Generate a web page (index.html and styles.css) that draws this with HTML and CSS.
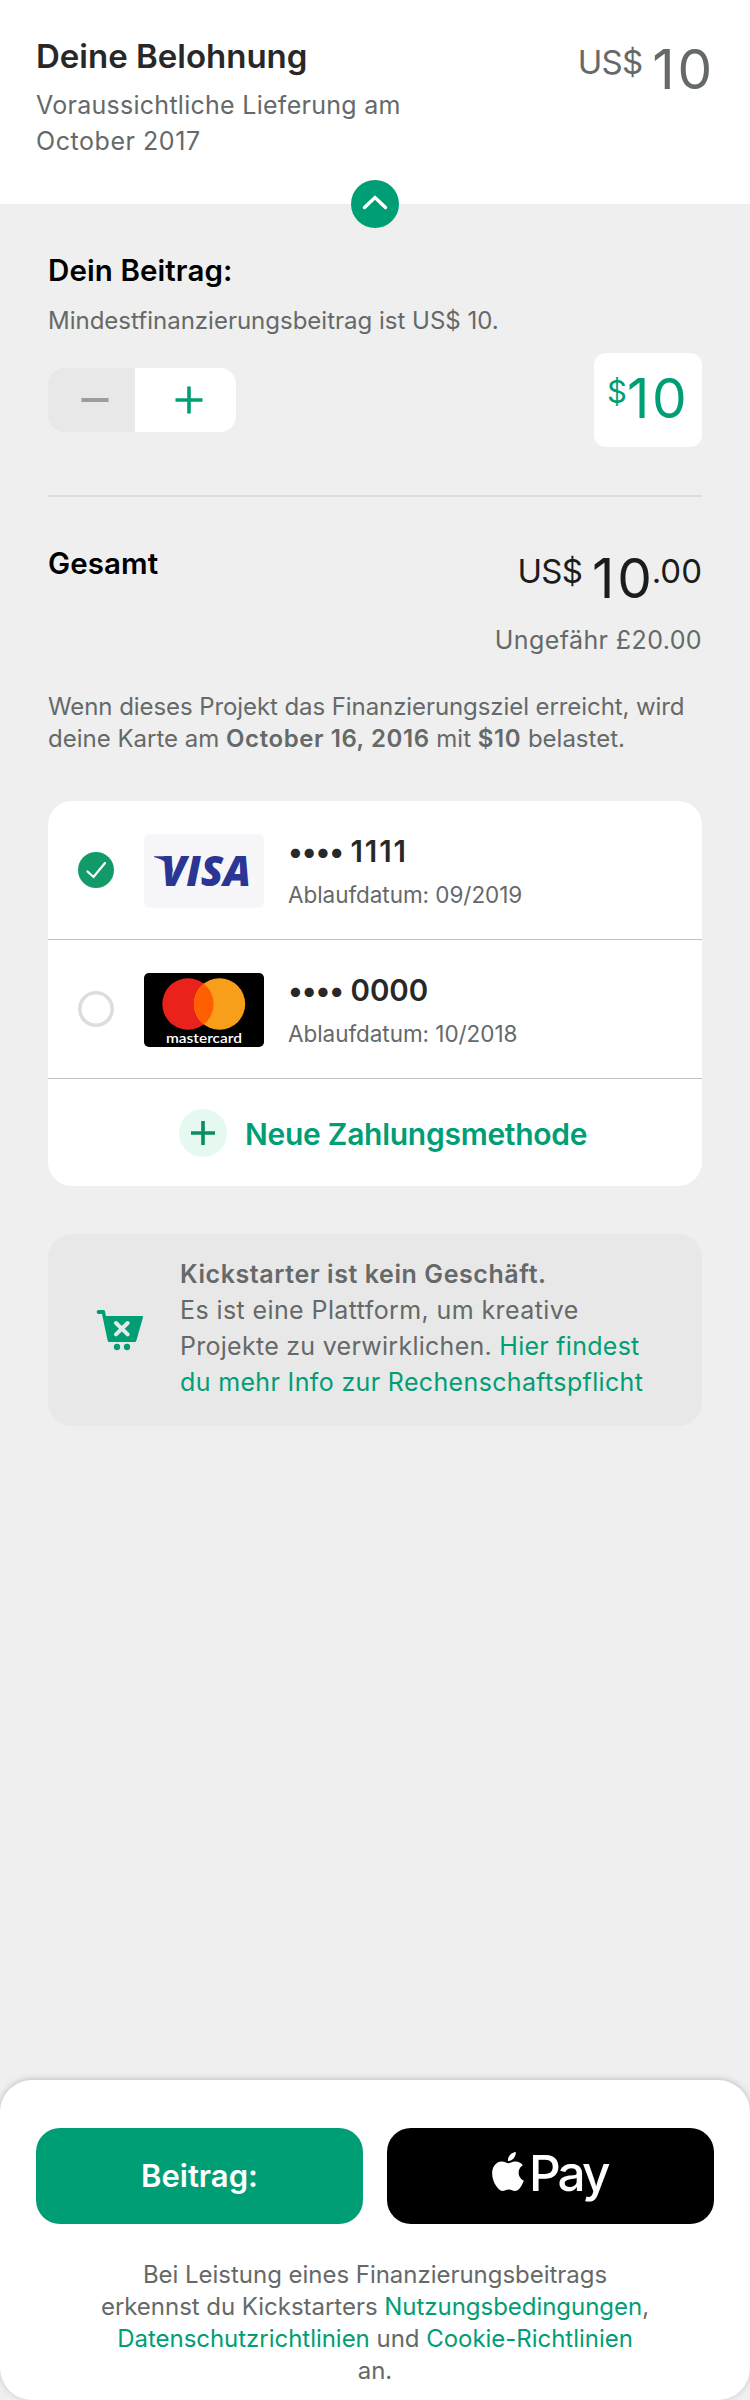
FILE: index.html
```html
<!DOCTYPE html>
<html lang="de">
<head>
<meta charset="utf-8">
<title>Deine Belohnung</title>
<link rel="stylesheet" href="styles.css">
</head>
<body>
<div class="page">
  <header class="reward">
    <div class="reward-text">
      <h1 class="reward-title">Deine Belohnung</h1>
      <p class="reward-sub">Voraussichtliche Lieferung am<br><span class="wide">October 2017</span></p>
    </div>
    <div class="amount amount-muted"><span class="amount-small">US$</span><span class="amount-big">10</span></div>
    <div class="toggle">
      <svg width="48" height="48" viewBox="0 0 48 48"><path d="M13.5 27.5 24 17.500l10.500 10" fill="none" stroke="#fff" stroke-width="3.400" stroke-linecap="round" stroke-linejoin="miter"/></svg>
    </div>
  </header>

  <main class="content">
    <h2 class="section-title">Dein Beitrag:</h2>
    <p class="minimum">Mindestfinanzierungsbeitrag ist US$ 10.</p>
    <div class="controls">
      <div class="stepper">
        <div class="step step-minus"><svg width="28" height="28" viewBox="0 0 28 28"><path d="M.5 14h27" stroke="#9a9e9c" stroke-width="4"/></svg></div>
        <div class="step step-plus"><svg width="28" height="28" viewBox="0 0 28 28"><path d="M.5 14h27M14 .5v27" stroke="#009e74" stroke-width="3.600"/></svg></div>
      </div>
      <div class="value"><span class="value-sign">$</span><span class="value-num">10</span></div>
    </div>
    <div class="rule"></div>

    <div class="total">
      <h2 class="section-title">Gesamt</h2>
      <div class="amount amount-total"><span class="amount-small">US$</span><span class="amount-big">10</span><span class="amount-cents">.00</span></div>
    </div>
    <p class="approx">Ungefähr £20.00</p>
    <p class="charge"><span class="tight">Wenn dieses Projekt das Finanzierungsziel erreicht, wird</span><br>deine Karte am <b>October 16, 2016</b> mit <b>$10</b> belastet.</p>

    <section class="cards">
      <div class="card-row">
        <svg class="radio" width="36" height="36" viewBox="0 0 36 36"><circle cx="18" cy="18" r="18" fill="#129b68"/><path d="M9.500 19.500 15.500 25 27 11" fill="none" stroke="#fff" stroke-width="2.200" stroke-linecap="round"/></svg>
        <svg class="brand" width="120" height="74" viewBox="0 0 120 74">
          <rect width="120" height="74" rx="5" fill="#f7f7fa"/>
          <text class="visa" x="17" y="51.500" textLength="90" lengthAdjust="spacingAndGlyphs">VISA</text>
          <path d="M10 22.300h13q3 0 3.600 2.700l3 15Q25.500 27 10 22.900z" fill="#2b3694"/>
        </svg>
        <div class="card-text"><div class="card-num"><span class="dots">••••</span> <span class="ones">1111</span></div><div class="card-exp">Ablaufdatum: 09/2019</div></div>
      </div>
      <div class="card-row">
        <svg class="radio" width="36" height="36" viewBox="0 0 36 36"><circle cx="18" cy="18" r="16.200" fill="#fff" stroke="#dcdedd" stroke-width="3.600"/></svg>
        <svg class="brand" width="120" height="74" viewBox="0 0 120 74">
          <rect width="120" height="74" rx="5" fill="#000"/>
          <circle cx="44" cy="31" r="25.700" fill="#eb211b"/>
          <circle cx="75.500" cy="31" r="25.700" fill="#f79f1a"/>
          <path d="M59.750 10.700a25.700 25.700 0 0 1 0 40.600a25.700 25.700 0 0 1 0-40.600z" fill="#ff5f00"/>
          <text class="mc" x="22" y="69.500" textLength="76" lengthAdjust="spacingAndGlyphs">mastercard</text>
        </svg>
        <div class="card-text"><div class="card-num"><span class="dots">••••</span> <span class="zeros">0000</span></div><div class="card-exp">Ablaufdatum: 10/2018</div></div>
      </div>
      <div class="add-row">
        <svg width="48" height="48" viewBox="0 0 48 48"><circle cx="24" cy="24" r="24" fill="#e5f9f1"/><path d="M12 24h24M24 12v24" stroke="#0b8c61" stroke-width="3.600"/></svg>
        <span class="add-label">Neue Zahlungsmethode</span>
      </div>
    </section>

    <section class="notice">
      <svg class="cart" width="48" height="42" viewBox="48 57 144 126">
        <path d="M56 60H70Q74 60 75 64L77.500 78H186Q190 78 189 82L169 152Q168 156 164 156H88Q84 156 83 152L66 72H56A6 6 0 0 1 56 60z" fill="#009e74"/>
        <path d="M108 99l35 34M143 99l-35 34" stroke="#e8e8e8" stroke-width="12" stroke-linecap="round"/>
        <circle cx="111" cy="171" r="9.500" fill="#009e74"/><circle cx="141" cy="171" r="9.500" fill="#009e74"/>
      </svg>
      <p class="notice-text"><b>Kickstarter ist kein Geschäft.</b><br><span class="loose">Es ist eine Plattform, um kreative</span><br><span class="snug">Projekte zu verwirklichen. <a>Hier findest</a></span><br><a>du mehr Info zur Rechenschaftspflicht</a></p>
    </section>
  </main>

  <footer class="footer">
    <div class="buttons">
      <div class="btn btn-pledge"><span class="btn-label">Beitrag:</span></div>
      <div class="btn btn-pay">
        <svg class="apple" width="32" height="39" viewBox="2.150 0 19.700 24"><path fill="#fff" d="M12.152 6.896c-.948 0-2.415-1.078-3.960-1.040-2.040.027-3.910 1.183-4.961 3.014-2.117 3.675-.546 9.103 1.519 12.090 1.013 1.454 2.208 3.090 3.792 3.039 1.520-.065 2.090-.987 3.935-.987 1.831 0 2.350.987 3.960.948 1.637-.026 2.676-1.480 3.676-2.948 1.156-1.688 1.636-3.325 1.662-3.415-.039-.013-3.182-1.221-3.220-4.857-.026-3.040 2.480-4.494 2.597-4.559-1.429-2.090-3.623-2.324-4.390-2.376-2-.156-3.675 1.090-4.610 1.090zM15.530 3.830c.843-1.012 1.400-2.427 1.245-3.830-1.207.052-2.662.805-3.532 1.818-.780.896-1.454 2.338-1.273 3.714 1.338.104 2.715-.688 3.559-1.701"/></svg>
        <span class="pay">Pay</span>
      </div>
    </div>
    <p class="terms">Bei Leistung eines Finanzierungsbeitrags<br>erkennst du Kickstarters <a>Nutzungsbedingungen</a>,<br><a>Datenschutzrichtlinien</a> und <a>Cookie-Richtlinien</a><br>an.</p>
  </footer>
</div>
</body>
</html>
```
FILE: styles.css
```css
* { box-sizing: border-box; }
html, body { margin: 0; }
body { background: #efefef; font-family: Inter, "Liberation Sans", sans-serif; color: #656969; }
h1, h2, p { margin: 0; }
svg { display: block; flex: none; }
b { font-weight: 600; letter-spacing: 0.58px; }
a { color: #009e74; }
.page { width: 750px; min-height: 2400px; display: flex; flex-direction: column; white-space: nowrap; }

.reward { position: relative; height: 204px; background: #fff; padding: 36px 38px 0 36px; display: flex; justify-content: space-between; align-items: flex-start; }
.reward-title { font-size: 33px; line-height: 40px; font-weight: 600; color: #282828; letter-spacing: 0; }
.reward-sub { margin-top: 11px; font-size: 25px; line-height: 36px; letter-spacing: 0.27px; }
.wide { letter-spacing: 0.55px; }
.toggle { position: absolute; left: 351px; top: 180px; width: 48px; height: 48px; border-radius: 50%; background: #009e74; }

.amount { display: flex; align-items: flex-start; color: #1b1c1c; }
.amount-muted { color: #656969; }
.amount-small, .amount-cents { font-size: 33px; line-height: 40px; margin-top: 6px; }
.amount-small { margin-right: 10px; letter-spacing: -0.8px; }
.amount-big { font-size: 55px; line-height: 60px; margin-top: 3px; letter-spacing: 2.8px; margin-right: -3px; }
.amount-total { padding-top: 2px; }

.content { padding: 46px 48px 0; }
.section-title { font-size: 29.500px; line-height: 40px; font-weight: 600; color: #000; letter-spacing: 0.1px; }
.minimum { margin-top: 15px; font-size: 24px; line-height: 32px; }
.controls { margin-top: 16px; height: 94px; display: flex; justify-content: space-between; align-items: center; }
.stepper { display: flex; width: 188px; height: 64px; border-radius: 16px; overflow: hidden; }
.step { display: flex; align-items: center; }
.step-minus { width: 87px; background: #e8e8e8; padding-left: 33px; }
.step-plus { flex: 1; background: #fff; padding-left: 40px; }
.value { width: 108px; height: 94px; border-radius: 12px; background: #fff; color: #009e74; display: flex; align-items: flex-start; padding-left: 13px; }
.value-sign { font-size: 31px; line-height: 40px; margin-top: 19px; }
.value-num { font-size: 55px; line-height: 60px; margin-top: 15px; letter-spacing: 2.8px; }
.rule { height: 2px; margin-top: 48px; background: #dcdedd; }

.total { margin-top: 46px; height: 79px; display: flex; justify-content: space-between; }
.approx { text-align: right; font-size: 25px; line-height: 36px; letter-spacing: 0.4px; }
.charge { margin-top: 33px; font-size: 24px; line-height: 32px; }
.tight { letter-spacing: -0.08px; }

.cards { margin-top: 46px; background: #fff; border-radius: 24px; }
.card-row { height: 139px; border-bottom: 1px solid #c1c1c1; display: flex; align-items: center; padding-left: 30px; }
.brand { margin-left: 30px; margin-top: 2px; }
.visa { font: italic 800 42px "Open Sans", sans-serif; fill: #2b3694; }
.mc { font: 600 14px Lato, sans-serif; fill: #fff; }
.card-text { margin-left: 24px; height: 100%; padding-top: 30px; }
.card-num { font-size: 29.500px; line-height: 40px; font-weight: 600; color: #282828; }
.dots { letter-spacing: -1.1px; }
.ones { letter-spacing: 1.9px; }
.zeros { letter-spacing: 0; }
.card-exp { font-size: 22.500px; line-height: 32px; margin-top: 8px; letter-spacing: -0.05px; }
.add-row { height: 107px; display: flex; align-items: center; padding-left: 131px; }
.add-label { margin-left: 18px; padding-top: 2px; font-size: 30px; line-height: 40px; font-weight: 600; color: #009e74; letter-spacing: -0.27px; }

.notice { margin-top: 48px; height: 192px; border-radius: 24px; background: #e8e8e8; display: flex; padding: 22px 0 0 48px; }
.cart { margin-top: 53px; }
.notice-text { margin-left: 36px; font-size: 25px; line-height: 36px; letter-spacing: 0.35px; }
.loose { letter-spacing: 0.4px; }
.snug { letter-spacing: 0.27px; }

.footer { margin-top: auto; height: 320px; background: #fff; border-radius: 32px; box-shadow: 0 -1px 6px rgba(0, 0, 0, .2); padding: 48px 36px 0; }
.buttons { display: grid; grid-template-columns: 1fr 1fr; gap: 24px; }
.btn { height: 96px; border-radius: 24px; display: flex; color: #fff; }
.btn-pledge { background: #009e74; align-items: center; justify-content: center; }
.btn-label { font-size: 31px; line-height: 40px; font-weight: 600; }
.btn-pay { background: #000; padding: 24px 0 0 105px; }
.pay { margin-left: 5px; margin-top: -9px; font-size: 49.500px; line-height: 60px; font-weight: 500; letter-spacing: -3px; }
.terms { margin-top: 35px; text-align: center; font-size: 24px; line-height: 32px; letter-spacing: -0.03px; }
```
